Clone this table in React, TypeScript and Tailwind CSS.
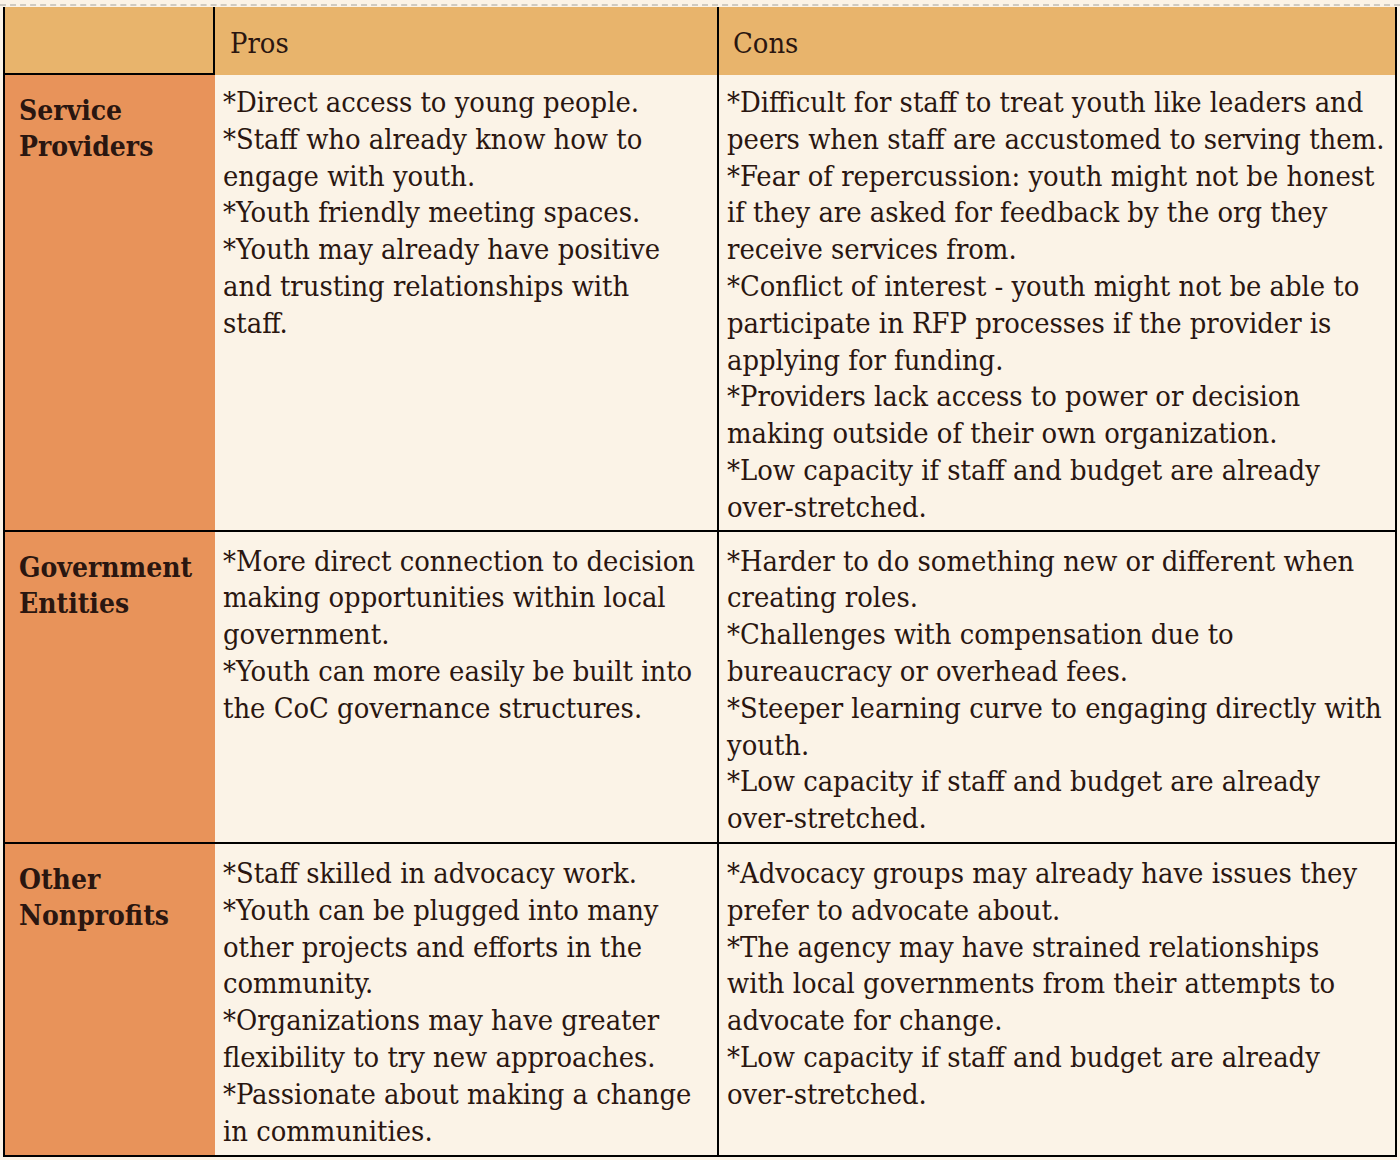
type Bullet = string[]

interface Row {
  label: string[]
  pros: Bullet[]
  cons: Bullet[]
}

const rows: Row[] = [
  {
    label: ['Service', 'Providers'],
    pros: [
      ['*Direct access to young people.'],
      ['*Staff who already know how to', 'engage with youth.'],
      ['*Youth friendly meeting spaces.'],
      ['*Youth may already have positive', 'and trusting relationships with', 'staff.'],
    ],
    cons: [
      ['*Difficult for staff to treat youth like leaders and', 'peers when staff are accustomed to serving them.'],
      ['*Fear of repercussion: youth might not be honest', 'if they are asked for feedback by the org they', 'receive services from.'],
      ['*Conflict of interest - youth might not be able to', 'participate in RFP processes if the provider is', 'applying for funding.'],
      ['*Providers lack access to power or decision', 'making outside of their own organization.'],
      ['*Low capacity if staff and budget are already', 'over-stretched.'],
    ],
  },
  {
    label: ['Government', 'Entities'],
    pros: [
      ['*More direct connection to decision', 'making opportunities within local', 'government.'],
      ['*Youth can more easily be built into', 'the CoC governance structures.'],
    ],
    cons: [
      ['*Harder to do something new or different when', 'creating roles.'],
      ['*Challenges with compensation due to', 'bureaucracy or overhead fees.'],
      ['*Steeper learning curve to engaging directly with', 'youth.'],
      ['*Low capacity if staff and budget are already', 'over-stretched.'],
    ],
  },
  {
    label: ['Other', 'Nonprofits'],
    pros: [
      ['*Staff skilled in advocacy work.'],
      ['*Youth can be plugged into many', 'other projects and efforts in the', 'community.'],
      ['*Organizations may have greater', 'flexibility to try new approaches.'],
      ['*Passionate about making a change', 'in communities.'],
    ],
    cons: [
      ['*Advocacy groups may already have issues they', 'prefer to advocate about.'],
      ['*The agency may have strained relationships', 'with local governments from their attempts to', 'advocate for change.'],
      ['*Low capacity if staff and budget are already', 'over-stretched.'],
    ],
  },
]

// row padding tuned per row so the separators land where the original table has them
const cellPad = ['pt-[9px] pb-[4px]', 'pt-[11px] pb-[5px]', 'pt-[11px] pb-[6px]']

function BulletList({ items }: { items: Bullet[] }) {
  return (
    <>
      {items.map((lines, i) => (
        <p key={i} className="whitespace-nowrap">
          {lines.map((line, j) => (
            <span key={j} className="block">
              {line}
            </span>
          ))}
        </p>
      ))}
    </>
  )
}

export default function App() {
  return (
    <div className="min-h-[1160px] w-[1400px] bg-[#fbf3e7] font-['DejaVu_Serif_Condensed','DejaVu_Serif',serif] text-[#2a1610]">
      <div className="h-[4px]" />
      <div className="h-[3px] border-t-2 border-dashed border-[#cfcac1]" />

      <div className="ml-[3px] w-[1394px] border-x-2 border-b-2 border-black">
        {/* header */}
        <div className="flex h-[68px] bg-[#e8b46c] text-[28.8px]">
          <div className="w-[210px] border-r-2 border-b-2 border-black" />
          <div className="flex w-[502px] items-center pt-[6px] pl-[15px]">Pros</div>
          <div className="flex w-[678px] items-center border-l-2 border-black pt-[6px] pl-[14px]">Cons</div>
        </div>

        {rows.map((row, i) => (
          <div key={row.label[0]} className={i > 0 ? 'flex border-t-2 border-black' : 'flex'}>
            <div className="w-[210px] bg-[#e8935a] pt-[18px] pl-[14px] text-[28px] leading-[36px] font-bold">
              {row.label.map((l) => (
                <span key={l} className="block">
                  {l}
                </span>
              ))}
            </div>
            <div className={`w-[502px] pl-[8px] text-[28.8px] leading-[36.8px] ${cellPad[i]}`}>
              <BulletList items={row.pros} />
            </div>
            <div className={`w-[678px] border-l-2 border-black pl-[8px] text-[28.8px] leading-[36.8px] ${cellPad[i]}`}>
              <BulletList items={row.cons} />
            </div>
          </div>
        ))}
      </div>
    </div>
  )
}
